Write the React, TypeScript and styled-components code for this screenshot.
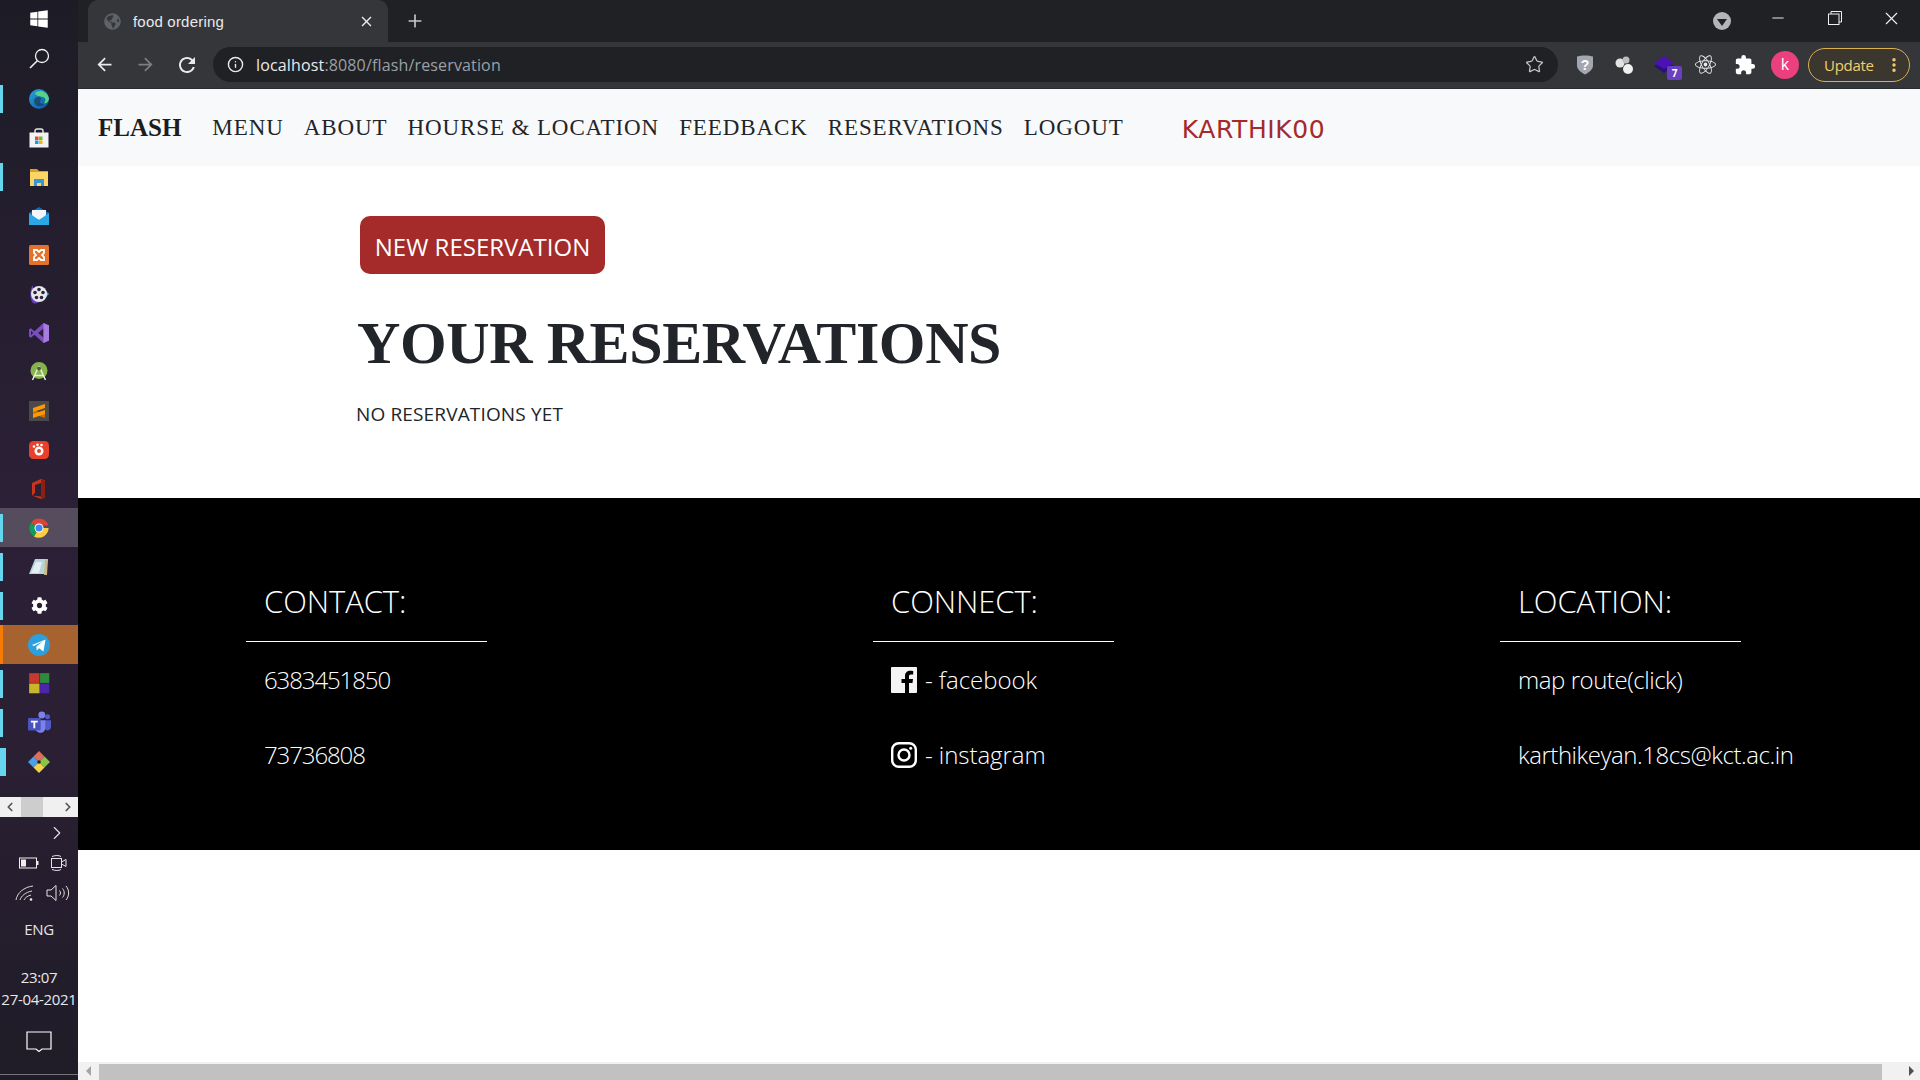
import React from "react";
import styled, { createGlobalStyle } from "styled-components";
import { FaCog, FaGlobeAmericas, FaReact, FaWindows } from "react-icons/fa";
import { MdArrowBack, MdArrowForward, MdClose, MdExtension, MdRefresh } from "react-icons/md";
import { Info, Plus, ChevronRight, ChevronLeft, Minus, X, MoreVertical, Star } from "lucide-react";

const UI_FONT = `"Open Sans", "Noto Sans", "Liberation Sans", sans-serif`;
const SERIF = `"Liberation Serif", "Times New Roman", serif`;

const GlobalStyle = createGlobalStyle`
  html, body {
    margin: 0;
    padding: 0;
    height: 100%;
    overflow: hidden;
    background: #fff;
  }
  * { box-sizing: border-box; }
`;

const Desktop = styled.div`
  display: flex;
  width: 1920px;
  height: 1080px;
  overflow: hidden;
  font-family: ${UI_FONT};
`;

/* taskbar docked on the left */
const Taskbar = styled.aside`
  width: 78px;
  flex: none;
  display: flex;
  flex-direction: column;
  color: #e8e8e8;
  background: linear-gradient(180deg, #1d1c26 0%, #2b2036 45%, #2a1f33 70%, #1f1c27 100%);
`;

const SystemSlot = styled.div<{ $h: number }>`
  height: ${(p) => p.$h}px;
  flex: none;
  display: flex;
  align-items: center;
  justify-content: center;
  color: #fff;
`;

const AppTile = styled.div<{ $mark?: "blue" | "orange" | "wide"; $tone?: "active" | "alert" }>`
  height: 39px;
  flex: none;
  display: flex;
  align-items: center;
  justify-content: center;
  position: relative;
  background: ${(p) =>
    p.$tone === "active" ? "rgba(255,255,255,.2)" : p.$tone === "alert" ? "#a7632f" : "transparent"};
  &::before {
    content: "";
    display: ${(p) => (p.$mark ? "block" : "none")};
    position: absolute;
    left: 0;
    top: ${(p) => (p.$mark === "orange" ? "0" : "6px")};
    bottom: ${(p) => (p.$mark === "orange" ? "0" : "5px")};
    width: ${(p) => (p.$mark === "wide" ? "6px" : "3px")};
    background: ${(p) => (p.$mark === "orange" ? "#f57c00" : "#66d6ee")};
  }
`;

const TileScroller = styled.div`
  height: 20px;
  margin-top: 16px;
  flex: none;
  display: flex;
  align-items: center;
  padding: 0 3px;
  background: #f0f0f0;
  color: #555;
`;

const ScrollerThumb = styled.span`
  width: 22px;
  height: 20px;
  margin: 0 auto 0 4px;
  background: #cdcdcd;
`;

const TrayRow = styled.div<{ $h: number }>`
  height: ${(p) => p.$h}px;
  flex: none;
  display: flex;
  align-items: center;
  justify-content: center;
  gap: 11px;
  color: #e4e4e4;
`;

const ExpandRow = styled(TrayRow)`
  padding-left: 36px;
`;

const TrayIcons = styled(TrayRow)`
  padding-left: 8px;
`;

const TrayText = styled.div`
  font-size: 15px;
  line-height: 22px;
  text-align: center;
  letter-spacing: -0.3px;
  white-space: nowrap;
`;

const TrayEnd = styled.div`
  flex: none;
  height: 1px;
  background: #77757c;
`;

/* browser window */
const Browser = styled.div`
  flex: 1;
  min-width: 0;
  display: flex;
  flex-direction: column;
`;

const TabStrip = styled.div`
  height: 42px;
  flex: none;
  display: flex;
  align-items: flex-end;
  padding-left: 10px;
  background: #202124;
  color: #fff;
`;

const Tab = styled.div`
  width: 300px;
  height: 42px;
  display: flex;
  align-items: center;
  gap: 12px;
  padding: 0 13px 0 16px;
  background: #35363a;
  border-radius: 10px 10px 0 0;
  color: #e8eaed;
`;

const TabTitle = styled.span`
  flex: 1;
  font-family: "Liberation Sans", sans-serif;
  font-size: 15px;
  letter-spacing: 0.2px;
`;

const NewTab = styled.span`
  margin: 0 0 8px 17px;
  height: 26px;
  display: flex;
  align-items: center;
  color: #c4c7c5;
`;

const WindowControls = styled.div`
  margin-left: auto;
  height: 42px;
  display: flex;
  align-items: center;
  color: #f0f0f0;
`;

const ProfileDrop = styled.span`
  width: 18px;
  height: 18px;
  margin-right: 18px;
  border-radius: 50%;
  background: #b4b5b8;
  display: flex;
  align-items: center;
  justify-content: center;
  &::after {
    content: "";
    margin-top: 3px;
    border: 5px solid transparent;
    border-top: 7px solid #202124;
    border-bottom: 0;
  }
`;

const WindowButton = styled.span`
  width: 57px;
  height: 36px;
  margin-bottom: 6px;
  display: flex;
  align-items: center;
  justify-content: center;
`;

const Toolbar = styled.div`
  height: 47px;
  flex: none;
  display: flex;
  align-items: center;
  padding: 0 10px 1px 6px;
  background: #35363a;
  border-bottom: 1px solid #2a2b2e;
  color: #e8eaed;
`;

const NavIcon = styled.span<{ $dim?: boolean }>`
  width: 41px;
  height: 30px;
  flex: none;
  display: flex;
  align-items: center;
  justify-content: center;
  color: ${(p) => (p.$dim ? "#7c7e82" : "#e8eaed")};
`;

const Omnibox = styled.div`
  flex: none;
  width: 1345px;
  height: 35px;
  margin-left: 6px;
  display: flex;
  align-items: center;
  gap: 12px;
  padding: 0 14px 0 14px;
  border-radius: 18px;
  background: #202124;
  font-size: 16px;
  letter-spacing: 0.15px;
`;

const Url = styled.div`
  flex: 1;
  color: #9aa0a6;
  white-space: nowrap;
  b {
    font-weight: 400;
    color: #e8eaed;
  }
`;

const ExtensionTray = styled.div`
  flex: 1;
  display: flex;
  align-items: center;
  justify-content: flex-end;
`;

const ExtensionSlot = styled.span`
  width: 40px;
  height: 30px;
  display: flex;
  align-items: center;
  justify-content: center;
  position: relative;
`;

const CountBadge = styled.span`
  position: absolute;
  right: 3px;
  bottom: 0;
  width: 15px;
  height: 14px;
  border-radius: 2px;
  background: #6a3fc0;
  color: #fff;
  font-size: 10px;
  font-weight: 700;
  line-height: 14px;
  text-align: center;
`;

const Avatar = styled.span`
  width: 28px;
  height: 28px;
  margin: 0 9px 0 6px;
  border-radius: 50%;
  background: #ec3f7d;
  color: #fff;
  font-size: 16px;
  line-height: 27px;
  text-align: center;
`;

const UpdatePill = styled.span`
  width: 102px;
  height: 34px;
  display: flex;
  align-items: center;
  justify-content: space-between;
  padding: 0 6px 0 15px;
  border: 1px solid #d9b14e;
  border-radius: 17px;
  background: #3b372f;
  color: #f2cf6e;
  font-size: 15px;
  letter-spacing: -0.3px;
`;

/* the web page */
const Page = styled.div`
  flex: 1;
  min-height: 0;
  background: #fff;
  display: flex;
  flex-direction: column;
`;

const Navbar = styled.nav`
  height: 77px;
  flex: none;
  display: flex;
  align-items: center;
  padding: 1px 0 0 20px;
  background: #f8f9fa;
  font-family: ${SERIF};
  color: #212529;
`;

const Brand = styled.a`
  font-size: 25px;
  font-weight: 700;
  margin-right: 31px;
  color: #1d1d1d;
`;

const NavLinks = styled.div`
  display: flex;
  gap: 20px;
`;

const NavLink = styled.a`
  font-size: 23px;
  letter-spacing: 0.9px;
  color: #212529;
  white-space: nowrap;
`;

const UserName = styled.a`
  margin: 2px 0 0 58px;
  font-family: "DejaVu Sans", sans-serif;
  font-size: 25px;
  letter-spacing: 0.6px;
  color: #a52a2a;
`;

const Reservations = styled.section`
  height: 332px;
  flex: none;
  padding: 50px 0 0 279px;
`;

const NewButton = styled.button`
  display: block;
  margin-left: 3px;
  width: 245px;
  height: 58px;
  padding: 3px 0 0;
  border: 0;
  border-radius: 10px;
  background: #a52a2a;
  color: #fff;
  font-family: ${UI_FONT};
  font-size: 24px;
`;

const Heading = styled.h1`
  margin: 34px 0 0;
  font-family: ${SERIF};
  font-size: 60px;
  line-height: 70px;
  font-weight: 700;
  letter-spacing: -0.4px;
  color: #212529;
  white-space: nowrap;
`;

const EmptyNote = styled.p`
  margin: 23px 0 0 -1px;
  font-size: 19px;
  line-height: 26px;
  letter-spacing: 0.15px;
  color: #212529;
`;

const Footer = styled.footer`
  height: 352px;
  flex: none;
  background: #000;
  color: #fff;
  padding: 78px 0 0 168px;
  display: grid;
  grid-template-columns: repeat(3, 627px);
`;

const FooterColumn = styled.div`
  display: flex;
  flex-direction: column;
`;

const FooterTitle = styled.div`
  height: 66px;
  width: 241px;
  padding: 2px 0 0 18px;
  border-bottom: 1.5px solid #fff;
  font-size: 31px;
  line-height: 46px;
  font-weight: 300;
  letter-spacing: -0.1px;
  white-space: nowrap;
`;

const spacing = { digits: "-1.1px", link: "-0.05px", text: "-0.45px" };

const FooterItem = styled.div<{ $kind?: keyof typeof spacing }>`
  height: 75px;
  padding-left: 18px;
  display: flex;
  align-items: center;
  gap: 8px;
  font-size: 24px;
  font-weight: 300;
  letter-spacing: ${(p) => spacing[p.$kind ?? "text"]};
  white-space: nowrap;
`;

const PageScrollbar = styled.div`
  height: 18px;
  flex: none;
  margin-top: auto;
  display: flex;
  align-items: center;
  background: #f1f1f1;
`;

const ScrollArrow = styled.span<{ $dir: "left" | "right" }>`
  width: ${(p) => (p.$dir === "left" ? "21px" : "38px")};
  flex: none;
  display: flex;
  justify-content: ${(p) => (p.$dir === "left" ? "center" : "flex-end")};
  padding-right: ${(p) => (p.$dir === "left" ? "0" : "6px")};
  &::after {
    content: "";
    border: 5px solid transparent;
    ${(p) => (p.$dir === "left" ? "border-right: 5px solid #a3a3a3; border-left: 0;" : "border-left: 5px solid #505050; border-right: 0;")}
  }
`;

const ScrollThumb = styled.span`
  flex: 1;
  height: 16px;
  margin-top: 1px;
  background: #c1c1c1;
`;

/* taskbar app icons */
const Svg: React.FC<{ size?: number; children: React.ReactNode }> = ({ size = 20, children }) => (
  <svg width={size} height={size} viewBox="0 0 20 20">{children}</svg>
);

const SearchIcon = () => (
  <svg width="21" height="21" viewBox="0 0 21 21" fill="none" stroke="#f2f2f2" strokeWidth="1.300">
    <circle cx="13" cy="8" r="6.500" />
    <path d="M8.300 12.700L1 20" strokeWidth="1.600" />
  </svg>
);

const EdgeIcon = () => (
  <Svg>
    <defs>
      <linearGradient id="edge" x1="0" y1="0" x2="1" y2="1">
        <stop offset="0" stopColor="#2aa5dc" />
        <stop offset="1" stopColor="#0b4f9e" />
      </linearGradient>
    </defs>
    <circle cx="10" cy="10" r="10" fill="url(#edge)" />
    <path d="M6 4C10 0 18 2 20 9c0 4-3 6-5 5 2-2 2-5-1-6-3-1-6 0-8-4z" fill="#56d38b" />
    <path d="M5 12c0-3 3-5 6-4 2 1 1 3 0 4-1 2 1 3 4 3-2 3-10 3-10-3z" fill="#1d2a3d" opacity=".55" />
  </Svg>
);

const StoreIcon = () => (
  <Svg>
    <path d="M6 5V3a2 2 0 012-2h4a2 2 0 012 2v2" fill="none" stroke="#e8e8e8" strokeWidth="1.4" />
    <rect y="4.500" width="19" height="15" x="0.500" fill="#f3f3f3" />
    <rect x="6" y="8.500" width="3.500" height="3.500" fill="#e2502a" />
    <rect x="10" y="8.500" width="3.500" height="3.500" fill="#7db62c" />
    <rect x="6" y="12.500" width="3.500" height="3.500" fill="#1e9ce0" />
    <rect x="10" y="12.500" width="3.500" height="3.500" fill="#f5b40a" />
  </Svg>
);

const ExplorerIcon = () => (
  <Svg>
    <path d="M1 2h7l2 2h9v3H1z" fill="#d9a11e" />
    <rect x="1" y="5" width="18" height="14" fill="#fbd566" />
    <path d="M5 19v-7h10v7h-3v-3H8v3z" fill="#3a94d6" />
  </Svg>
);

const MailIcon = () => (
  <Svg>
    <path d="M0 7l10-6 10 6v12H0z" fill="#0f6cbd" />
    <path d="M3 4h14v7l-7 3-7-3z" fill="#f2f6fa" />
    <path d="M0 7l10 7 10-7v12H0z" fill="#2aa7e6" />
  </Svg>
);

const XamppIcon = () => (
  <Svg>
    <rect width="20" height="20" rx="1.500" fill="#e2722c" />
    <path d="M5 5h3l2 2 2-2h3v3l-2 2 2 2v3h-3l-2-2-2 2H5v-3l2-2-2-2z" fill="none" stroke="#fff" strokeWidth="1.800" />
  </Svg>
);

const ReelIcon = () => (
  <Svg>
    <path d="M4 1c-3 3-4 13 0 18 2 1 5 0 6-1L4 10z" fill="#6a3fc0" />
    <path d="M16 6l4 4-4 4z" fill="#25b7e4" />
    <circle cx="10" cy="10" r="8" fill="#e7e7ee" />
    {[[10, 5.500], [14, 8.500], [12.500, 13.500], [7.500, 13.500], [6, 8.500]].map(([x, y]) => (
      <circle key={x} cx={x} cy={y} r="1.800" fill="#2b2536" />
    ))}
  </Svg>
);

const VisualStudioIcon = () => (
  <Svg>
    <path d="M14.500 0L20 2.500v15L14.500 20 5.500 11.800 1.800 14.700 0 13.600V6.400l1.800-1.100 3.700 2.900z" fill="#7b4ec0" />
    <path d="M14.500 5.500v9l-5.500-4.500zM2 7.800v4.400L4.200 10z" fill="#2b2036" />
    <path d="M14.500 0L20 2.500v15L14.500 20z" fill="#a77be0" />
  </Svg>
);

const AndroidStudioIcon = () => (
  <Svg>
    <circle cx="10" cy="8.500" r="8.500" fill="#87b44a" />
    <path d="M10 4L3.500 18M10 4l6.500 14M5.500 13.500h9" stroke="#e8eee0" strokeWidth="1.500" fill="none" />
    <circle cx="10" cy="6.500" r="2" fill="#4f5b43" />
  </Svg>
);

const SublimeIcon = () => (
  <Svg>
    <rect width="20" height="20" fill="#4a4a4c" />
    <path d="M4 9l12 4v4L4 13z" fill="#c76f00" />
    <path d="M4 7l12-4v4L4 11zM4 13l12-4v4L4 17z" fill="#ff9800" />
  </Svg>
);

const PawIcon = () => (
  <Svg>
    <rect y="1" width="20" height="18" rx="4.500" fill="#e8402a" />
    <circle cx="10" cy="11" r="4.500" fill="#fff" />
    <circle cx="10" cy="11" r="2" fill="#e8402a" />
    <circle cx="5" cy="6.500" r="1.300" fill="#fff" />
    <circle cx="8.500" cy="4.800" r="1.300" fill="#fff" />
    <circle cx="12.500" cy="5" r="1.300" fill="#fff" />
  </Svg>
);

const OfficeIcon = () => (
  <Svg>
    <path d="M3 4l9-4 4 1.500v17L12 20 3 16.500l9 1V4L6 6v8l-3 2.500z" fill="#c8351b" />
    <path d="M12 .5l4 1v17l-4 1.500z" fill="#8c1f10" />
  </Svg>
);

const ChromeIcon = () => (
  <Svg>
    <path d="M10 10L2 4.700A10 10 0 0119.600 7.500H10z" fill="#db4437" />
    <path d="M10 10l-5 8.500A10 10 0 012 4.700z" fill="#0f9d58" />
    <path d="M10 10h9.600A10 10 0 015 18.700z" fill="#ffcd40" />
    <circle cx="10" cy="10" r="4.500" fill="#fff" />
    <circle cx="10" cy="10" r="3.500" fill="#4285f4" />
  </Svg>
);

const NotesIcon = () => (
  <Svg>
    <path d="M6 2h13l-3 15H0z" fill="#b4d4df" />
    <path d="M16 2h3l-1 16h-3z" fill="#c9b98a" />
    <path d="M2 16l5-11h6l-3 11z" fill="#e5eef0" />
  </Svg>
);

const TelegramIcon = () => (
  <Svg size={22}>
    <circle cx="10" cy="10" r="10" fill="#2c9fdc" />
    <path d="M3.500 10l12.500-5-2 11-4-3-2 2-.5-3.500 6-5-8 4.500z" fill="#fff" />
  </Svg>
);

const TilesIcon = () => (
  <Svg size={23}>
    <rect x="1" y="1" width="9" height="8.500" fill="#c53a2c" />
    <rect x="10.500" y="1" width="8" height="8.500" fill="#2e8b3d" />
    <rect x="1" y="10" width="9" height="8.500" fill="#c8b72b" />
    <rect x="10.500" y="10" width="8" height="8.500" fill="#4b26a8" />
  </Svg>
);

const TeamsIcon = () => (
  <Svg size={23}>
    <circle cx="12" cy="3.500" r="3" fill="#7b83eb" />
    <circle cx="17" cy="5" r="2.200" fill="#5059c9" />
    <path d="M14 8h6v6c0 2-2 3-3 3s-3-1-3-3z" fill="#5059c9" />
    <path d="M6 8h9v7c0 2-2 4-4 4s-5-2-5-4z" fill="#7b83eb" />
    <rect y="6" width="11" height="11" rx="1" fill="#4b53bc" />
    <path d="M2.500 8.500h6v1.500H6.300v5H4.700v-5H2.500z" fill="#fff" />
  </Svg>
);

const DiamondIcon = () => (
  <Svg size={22}>
    <path d="M10 0l5 5-5 5-5-5z" fill="#df6d5d" />
    <path d="M15 5l5 5-5 5-5-5z" fill="#8bc34a" />
    <path d="M5 5l5 5-5 5-5-5z" fill="#4a9fe6" />
    <path d="M10 10l5 5-5 5-5-5z" fill="#f2d34f" />
    <circle cx="10" cy="10" r="1.600" fill="#222" />
  </Svg>
);

const BatteryIcon = () => (
  <svg width="20" height="12" viewBox="0 0 20 12" fill="none">
    <rect x=".5" y="1" width="17" height="10" stroke="#eee" />
    <rect x="2" y="2.500" width="5" height="7" fill="#eee" />
    <rect x="18" y="4" width="1.500" height="4" fill="#eee" />
  </svg>
);

const MeetIcon = () => (
  <svg width="18" height="16" viewBox="0 0 18 16" fill="none" stroke="#e4e4e4">
    <rect x="1.500" y="3.500" width="10" height="9" />
    <path d="M11.500 7l4.500-2.500v7L11.500 9M2 1.500c3-1.300 7-1.300 9 0M2 14.500c3 1.300 7 1.300 9 0" />
  </svg>
);

const WifiIcon = () => (
  <svg width="20" height="16" viewBox="0 0 20 16" fill="none" stroke="#d8d8d8">
    <path d="M1 15C2 8 9 2 18 1M5 15c1-4 6-8 12-9M9 15c1-2 3-4 7-5" />
    <circle cx="16" cy="14.500" r="1.300" fill="#eee" stroke="none" />
  </svg>
);

const SpeakerIcon = () => (
  <svg width="25" height="18" viewBox="0 0 25 18" fill="none" stroke="#e4e4e4">
    <path d="M1 6h4l5-4.500v15L5 12H1zM13.500 6.500c1.300 1.500 1.300 3.500 0 5M16.500 4.500c2.300 2.500 2.300 6.500 0 9M20 2c3.500 4 3.500 10 0 14" />
  </svg>
);

const NotifyIcon = () => (
  <svg width="26" height="22" viewBox="0 0 26 22" fill="none" stroke="#fff" strokeWidth="1.200">
    <path d="M1 1h24v17H16l-3 2.500-3-2.500H1z" />
  </svg>
);

const RestoreIcon = () => (
  <svg width="14" height="14" viewBox="0 0 14 14" fill="none" stroke="#f0f0f0">
    <rect x=".5" y="3" width="10.500" height="10.500" />
    <path d="M3 3V.5h10.500V11H11" />
  </svg>
);

const ShieldIcon = () => (
  <svg width="20" height="22" viewBox="0 0 20 22">
    <path d="M2 2.500C6 1 14 1 18 2.500v9c0 4-4 7-8 9-4-2-8-5-8-9z" fill="#a3a7b0" />
    <text x="10" y="15.500" textAnchor="middle" fontSize="14" fontWeight="700" fontFamily="Liberation Sans" fill="#fff">?</text>
  </svg>
);

const BubblesIcon = () => (
  <svg width="22" height="22" viewBox="0 0 22 22">
    <circle cx="6" cy="9" r="4.500" fill="#e3e3e3" />
    <circle cx="12" cy="6" r="3.500" fill="#bdbdbd" />
    <circle cx="14" cy="15" r="5" fill="#f0f0f0" />
  </svg>
);

const LayersIcon = () => (
  <svg width="24" height="20" viewBox="0 0 24 20">
    <path d="M1 11l11-6 9 6-10 7z" fill="#2a0f80" />
    <path d="M1 8l10-7 10 7-10 6z" fill="#4a12b0" />
  </svg>
);

const FacebookIcon = () => (
  <svg width="26" height="26" viewBox="0 0 26 26">
    <path d="M1 0h24a1 1 0 011 1v24a1 1 0 01-1 1h-7V16h3.500l.5-4h-4V9.500c0-1.200.4-2 2-2h2.200V4c-.5 0-1.700-.2-3-.2-3.100 0-5.200 1.900-5.200 5.300V12h-3.500v4H14v10H1a1 1 0 01-1-1V1a1 1 0 011-1z" fill="#f4f4f4" />
  </svg>
);

const InstagramIcon = () => (
  <svg width="26" height="26" viewBox="0 0 26 26" fill="none" stroke="#fff" strokeWidth="2.400">
    <rect x="1.200" y="1.200" width="23.600" height="23.600" rx="6.500" />
    <circle cx="13" cy="13" r="5.500" />
    <circle cx="19.700" cy="6.300" r="1.500" fill="#fff" stroke="none" />
  </svg>
);

const apps: { icon: React.ReactNode; mark?: "blue" | "orange" | "wide"; tone?: "active" | "alert" }[] = [
  { icon: <EdgeIcon />, mark: "blue" },
  { icon: <StoreIcon /> },
  { icon: <ExplorerIcon />, mark: "blue" },
  { icon: <MailIcon /> },
  { icon: <XamppIcon /> },
  { icon: <ReelIcon /> },
  { icon: <VisualStudioIcon /> },
  { icon: <AndroidStudioIcon /> },
  { icon: <SublimeIcon /> },
  { icon: <PawIcon /> },
  { icon: <OfficeIcon /> },
  { icon: <ChromeIcon />, mark: "blue", tone: "active" },
  { icon: <NotesIcon />, mark: "blue" },
  { icon: <FaCog size={17} color="#fff" />, mark: "blue" },
  { icon: <TelegramIcon />, mark: "orange", tone: "alert" },
  { icon: <TilesIcon />, mark: "blue" },
  { icon: <TeamsIcon />, mark: "blue" },
  { icon: <DiamondIcon />, mark: "wide" },
];

const links = ["MENU", "ABOUT", "HOURSE & LOCATION", "FEEDBACK", "RESERVATIONS", "LOGOUT"];

export default function App() {
  return (
    <Desktop>
      <GlobalStyle />
      <Taskbar>
        <SystemSlot $h={38}>
          <FaWindows size={20} />
        </SystemSlot>
        <SystemSlot $h={41}>
          <SearchIcon />
        </SystemSlot>
        {apps.map((app, i) => (
          <AppTile key={i} $mark={app.mark} $tone={app.tone}>
            {app.icon}
          </AppTile>
        ))}
        <TileScroller>
          <ChevronLeft size={14} strokeWidth={3} />
          <ScrollerThumb />
          <ChevronRight size={14} strokeWidth={3} />
        </TileScroller>
        <ExpandRow $h={32}>
          <ChevronRight size={22} strokeWidth={1.2} />
        </ExpandRow>
        <TrayIcons $h={28}>
          <BatteryIcon />
          <MeetIcon />
        </TrayIcons>
        <TrayIcons $h={32}>
          <WifiIcon />
          <SpeakerIcon />
        </TrayIcons>
        <TrayRow $h={40}>
          <TrayText>ENG</TrayText>
        </TrayRow>
        <TrayRow $h={17} />
        <TrayText>
          23:07
          <br />
          27-04-2021
        </TrayText>
        <TrayRow $h={64}>
          <NotifyIcon />
        </TrayRow>
        <TrayEnd />
      </Taskbar>
      <Browser>
        <TabStrip>
          <Tab>
            <FaGlobeAmericas size={17} color="#5f6368" />
            <TabTitle>food ordering</TabTitle>
            <MdClose size={17} />
          </Tab>
          <NewTab>
            <Plus size={20} strokeWidth={2} />
          </NewTab>
          <WindowControls>
            <ProfileDrop />
            <WindowButton>
              <Minus size={18} strokeWidth={1.3} />
            </WindowButton>
            <WindowButton>
              <RestoreIcon />
            </WindowButton>
            <WindowButton>
              <X size={21} strokeWidth={1.3} />
            </WindowButton>
          </WindowControls>
        </TabStrip>
        <Toolbar>
          <NavIcon>
            <MdArrowBack size={21} />
          </NavIcon>
          <NavIcon $dim>
            <MdArrowForward size={21} />
          </NavIcon>
          <NavIcon>
            <MdRefresh size={24} />
          </NavIcon>
          <Omnibox>
            <Info size={17} strokeWidth={2} />
            <Url>
              <b>localhost</b>:8080/flash/reservation
            </Url>
            <Star size={19} strokeWidth={1.6} color="#c4c7c5" />
          </Omnibox>
          <ExtensionTray>
            <ExtensionSlot>
              <ShieldIcon />
            </ExtensionSlot>
            <ExtensionSlot>
              <BubblesIcon />
            </ExtensionSlot>
            <ExtensionSlot>
              <LayersIcon />
              <CountBadge>7</CountBadge>
            </ExtensionSlot>
            <ExtensionSlot>
              <FaReact size={21} />
            </ExtensionSlot>
            <ExtensionSlot>
              <MdExtension size={22} color="#fff" />
            </ExtensionSlot>
            <Avatar>k</Avatar>
            <UpdatePill>
              Update
              <MoreVertical size={18} strokeWidth={2.6} />
            </UpdatePill>
          </ExtensionTray>
        </Toolbar>
        <Page>
          <Navbar>
            <Brand>FLASH</Brand>
            <NavLinks>
              {links.map((link) => (
                <NavLink key={link}>{link}</NavLink>
              ))}
            </NavLinks>
            <UserName>KARTHIK00</UserName>
          </Navbar>
          <Reservations>
            <NewButton>NEW RESERVATION</NewButton>
            <Heading>YOUR RESERVATIONS</Heading>
            <EmptyNote>NO RESERVATIONS YET</EmptyNote>
          </Reservations>
          <Footer>
            <FooterColumn>
              <FooterTitle>CONTACT:</FooterTitle>
              <FooterItem $kind="digits">6383451850</FooterItem>
              <FooterItem $kind="digits">73736808</FooterItem>
            </FooterColumn>
            <FooterColumn>
              <FooterTitle>CONNECT:</FooterTitle>
              <FooterItem $kind="link">
                <FacebookIcon /> - facebook
              </FooterItem>
              <FooterItem $kind="link">
                <InstagramIcon /> - instagram
              </FooterItem>
            </FooterColumn>
            <FooterColumn>
              <FooterTitle>LOCATION:</FooterTitle>
              <FooterItem>map route(click)</FooterItem>
              <FooterItem>karthikeyan.18cs@kct.ac.in</FooterItem>
            </FooterColumn>
          </Footer>
          <PageScrollbar>
            <ScrollArrow $dir="left" />
            <ScrollThumb />
            <ScrollArrow $dir="right" />
          </PageScrollbar>
        </Page>
      </Browser>
    </Desktop>
  );
}
